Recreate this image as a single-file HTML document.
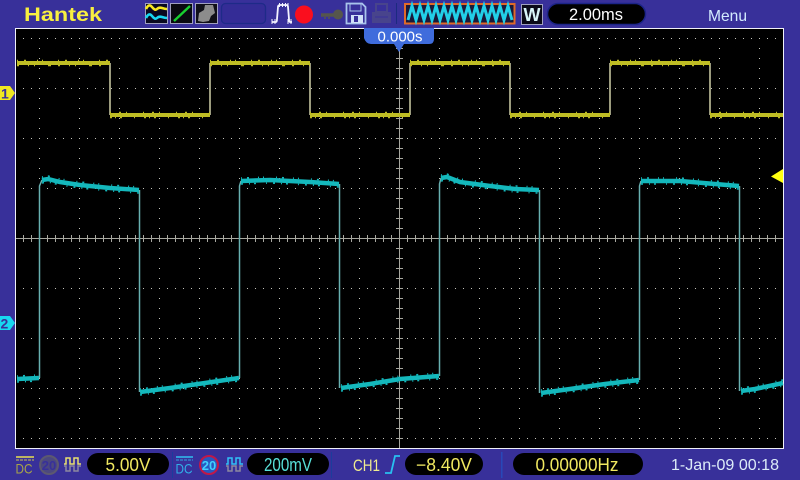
<!DOCTYPE html>
<html lang="en">
<head>
<meta charset="utf-8">
<title>Hantek Oscilloscope</title>
<style>
html,body{margin:0;padding:0;background:#38309a;width:800px;height:480px;overflow:hidden}
svg{display:block;position:absolute;left:0;top:0}
text{font-family:"Liberation Sans",sans-serif}
</style>
</head>
<body>
<svg width="800" height="480" viewBox="0 0 800 480" xmlns="http://www.w3.org/2000/svg">
<defs>
  <pattern id="hd" x="23" y="38" width="8" height="50" patternUnits="userSpaceOnUse"><rect width="1" height="1" fill="#c4c4bc"/></pattern>
  <pattern id="vd" x="39" y="38" width="40" height="10" patternUnits="userSpaceOnUse"><rect width="1" height="1" fill="#c4c4bc"/></pattern>
  <path id="t1" d="M17 63H110M210 63H310M410 63H510M610 63H710"/>
  <path id="t1l" d="M110 115H210M310 115H410M510 115H610M710 115H783"/>
  <path id="t2" d="M17 379L39 378M42 180L48 179L60 182L80 185L110 188L139 190M241 181L270 180L310 182L339 184M441 178L447 177L460 182L490 186L515 189L539 190M641 181L680 181L715 184L739 186M140 392L170 388L205 383L239 378M341 388L370 384L400 379L439 376M541 393L570 389L605 384L639 380M741 391L755 389L783 383"/>
</defs>

<rect width="800" height="480" fill="#38309a"/>

<!-- screen -->
<rect x="15.5" y="28.5" width="768" height="420" fill="#000" stroke="#f0f0f8" stroke-width="1"/>
<rect x="16" y="29" width="767" height="419" fill="url(#hd)"/>
<rect x="16" y="29" width="767" height="419" fill="url(#vd)"/>

<!-- centre axes -->
<path d="M16 238.5H783M399.5 29V448" stroke="#a8a8a0" stroke-width="1" fill="none"/>
<path d="M23.5 235V242M31.5 235V242M39.5 235V242M47.5 235V242M55.5 235V242M63.5 235V242M71.5 235V242M79.5 235V242M87.5 235V242M95.5 235V242M103.5 235V242M111.5 235V242M119.5 235V242M127.5 235V242M135.5 235V242M143.5 235V242M151.5 235V242M159.5 235V242M167.5 235V242M175.5 235V242M183.5 235V242M191.5 235V242M199.5 235V242M207.5 235V242M215.5 235V242M223.5 235V242M231.5 235V242M239.5 235V242M247.5 235V242M255.5 235V242M263.5 235V242M271.5 235V242M279.5 235V242M287.5 235V242M295.5 235V242M303.5 235V242M311.5 235V242M319.5 235V242M327.5 235V242M335.5 235V242M343.5 235V242M351.5 235V242M359.5 235V242M367.5 235V242M375.5 235V242M383.5 235V242M391.5 235V242M407.5 235V242M415.5 235V242M423.5 235V242M431.5 235V242M439.5 235V242M447.5 235V242M455.5 235V242M463.5 235V242M471.5 235V242M479.5 235V242M487.5 235V242M495.5 235V242M503.5 235V242M511.5 235V242M519.5 235V242M527.5 235V242M535.5 235V242M543.5 235V242M551.5 235V242M559.5 235V242M567.5 235V242M575.5 235V242M583.5 235V242M591.5 235V242M599.5 235V242M607.5 235V242M615.5 235V242M623.5 235V242M631.5 235V242M639.5 235V242M647.5 235V242M655.5 235V242M663.5 235V242M671.5 235V242M679.5 235V242M687.5 235V242M695.5 235V242M703.5 235V242M711.5 235V242M719.5 235V242M727.5 235V242M735.5 235V242M743.5 235V242M751.5 235V242M759.5 235V242M767.5 235V242M775.5 235V242" stroke="#a8a8a0" stroke-width="1" fill="none"/>
<path d="M396 38.5H403M396 48.5H403M396 58.5H403M396 68.5H403M396 78.5H403M396 88.5H403M396 98.5H403M396 108.5H403M396 118.5H403M396 128.5H403M396 138.5H403M396 148.5H403M396 158.5H403M396 168.5H403M396 178.5H403M396 188.5H403M396 198.5H403M396 208.5H403M396 218.5H403M396 228.5H403M396 248.5H403M396 258.5H403M396 268.5H403M396 278.5H403M396 288.5H403M396 298.5H403M396 308.5H403M396 318.5H403M396 328.5H403M396 338.5H403M396 348.5H403M396 358.5H403M396 368.5H403M396 378.5H403M396 388.5H403M396 398.5H403M396 408.5H403M396 418.5H403M396 428.5H403M396 438.5H403" stroke="#a8a8a0" stroke-width="1" fill="none"/>

<!-- CH1 trace -->
<path d="M110 63V115M210 115V63M310 63V115M410 115V63M510 63V115M610 115V63M710 63V115" stroke="#d0d0a8" stroke-width="1.500" fill="none"/>
<g fill="none" stroke="#bfbd24">
  <use href="#t1" stroke-width="4"/>
  <use href="#t1l" stroke-width="4"/>
  <use href="#t1" stroke-width="1.500" stroke-dasharray="1 6 2 11 1 4 1 15" transform="translate(0,-2.500)"/>
  <use href="#t1" stroke-width="1.500" stroke-dasharray="2 9 1 5 1 13 3 7" transform="translate(0,2.500)"/>
  <use href="#t1l" stroke-width="1.500" stroke-dasharray="1 8 2 5 1 16" transform="translate(0,-2.500)"/>
  <use href="#t1l" stroke-width="1.500" stroke-dasharray="2 3 1 4 2 12 1 9" transform="translate(0,2.500)"/>
</g>

<!-- CH2 trace -->
<path d="M39.500 378V186L42 180M139.500 190V392M239.500 378V186L241 181M339.500 184V388M439.500 376V184L441 178M539.500 190V393M639.500 380V186L641 181M739.500 186V391" stroke="#68b0b0" stroke-width="1.500" fill="none"/>
<g fill="none" stroke="#14b8bc">
  <use href="#t2" stroke-width="4.500"/>
  <use href="#t2" stroke-width="1.500" stroke-dasharray="1 5 2 9 1 4 1 12" transform="translate(0,-3)"/>
  <use href="#t2" stroke-width="1.500" stroke-dasharray="2 6 1 4 2 10 1 6" transform="translate(0,3)"/>
</g>

<!-- channel markers -->
<path d="M0 86H10L15 93L10 100H0Z" fill="#f0e820"/>
<text x="1" y="98.500" font-size="14" font-weight="bold" fill="#38309a">1</text>
<path d="M0 316H10L15 323L10 330H0Z" fill="#18d8f0"/>
<text x="0.500" y="328.500" font-size="14" font-weight="bold" fill="#38309a">2</text>
<path d="M783 169V183L771 176.500Z" fill="#ffff10"/>

<!-- time marker -->
<path d="M364 28H434V39Q434 44 429 44H404L399 52L394 44H371Q366 44 364 38Z" fill="#3f6cdc"/>
<text x="400" y="41.500" font-size="15" fill="#fff" text-anchor="middle" textLength="45" lengthAdjust="spacingAndGlyphs">0.000s</text>

<!-- header -->
<text x="24" y="21" font-size="19" font-weight="bold" fill="#f8f040" textLength="78" lengthAdjust="spacingAndGlyphs">Hantek</text>

<rect x="145.500" y="3.500" width="22" height="20" fill="#0a0a20" stroke="#a0a0c0"/>
<path d="M146 9Q149 3 152 7T157 9T162 8T167 9" fill="none" stroke="#f8e820" stroke-width="2.600"/>
<path d="M146 18Q149 12 152 16T157 18T162 17T167 18" fill="none" stroke="#18d8f0" stroke-width="2.600"/>

<rect x="170.500" y="3.500" width="22" height="20" fill="#0a0a10" stroke="#a0a0c0"/>
<path d="M174 21L190 6" stroke="#18d030" stroke-width="2.400" fill="none"/>

<rect x="195.500" y="3.500" width="22" height="20" fill="#101018" stroke="#a0a0c0"/>
<path d="M198 21L199 13L204 10L205 5L213 5L215 13L211 16L209 21L203 22Z" fill="#8c8c8c"/>

<rect x="221.500" y="3.500" width="44" height="20" rx="4" fill="#342c96" stroke="#1e2a88" stroke-width="1.300"/>

<path d="M272 22H276Q277 22 277 19L278 7Q278 5 280 5H286Q288 5 288 7L289 19Q289 22 290 22H292" fill="none" stroke="#f4f4ff" stroke-width="1.800"/>
<path d="M279.500 3V7M282.500 3V7M285.500 3V7M288 3V7M272 19V24M275 19V24M288 19V24M291 19V24" stroke="#f4f4ff" stroke-width="1"/>
<circle cx="304" cy="14.500" r="9" fill="#fa0e1e"/>

<path d="M322 15H334" stroke="#56564c" stroke-width="3.500"/>
<path d="M326 15L321 13V17Z" fill="#56564c"/>
<path d="M325 17V19M329 17V19" stroke="#56564c" stroke-width="1.500"/>
<circle cx="338" cy="14.500" r="5" fill="#56564c"/>

<path d="M346.500 3.500H362L365.500 7V23.500H346.500Z" fill="none" stroke="#a8c4ec" stroke-width="1.800"/>
<rect x="350" y="4" width="11" height="7" fill="none" stroke="#a8c4ec"/>
<rect x="351" y="15" width="12" height="8" fill="#d0e0f8"/>
<rect x="354" y="16" width="4" height="6" fill="#38309a"/>

<path d="M376 4H387V12H376Z" fill="none" stroke="#48448c" stroke-width="2"/>
<path d="M372 12H391V23H372Z" fill="#48448c"/>
<path d="M375 17H388" stroke="#38309a" stroke-width="1"/>

<rect x="396" y="3" width="1" height="21" fill="#1c2a80"/>

<rect x="405" y="4" width="109.500" height="19.500" fill="#1a1a3a" stroke="#e06a28" stroke-width="2"/>
<path d="M408 20L412 6L416 20L420 6L424 20L428 6L432 20L436 6L440 20L444 6L448 20L452 6L456 20L460 6L464 20L468 6L472 20L476 6L480 20L484 6L488 20L492 6L496 20L500 6L504 20L508 6L512 20" fill="none" stroke="#22d0e8" stroke-width="3"/>

<rect x="521.500" y="4.500" width="21" height="20" fill="#0a0a18" stroke="#a0a0c0"/>
<text x="532" y="21" font-size="18" font-weight="bold" fill="#d8f4f8" text-anchor="middle">W</text>

<rect x="547.500" y="3.500" width="98" height="21" rx="10.500" fill="#000" stroke="#1c2488" stroke-width="1.500"/>
<text x="596" y="20" font-size="17" fill="#fff" text-anchor="middle" textLength="54" lengthAdjust="spacingAndGlyphs">2.00ms</text>

<text x="708" y="21" font-size="16" fill="#d4ecff" textLength="39" lengthAdjust="spacingAndGlyphs">Menu</text>

<!-- footer CH1 -->
<path d="M16 457H34" stroke="#e8e050" stroke-width="1.500"/>
<path d="M16 460H34" stroke="#c8c050" stroke-width="1" stroke-dasharray="3 1"/>
<text x="24" y="473.500" font-size="14" fill="#a8a448" text-anchor="middle" textLength="17" lengthAdjust="spacingAndGlyphs">DC</text>
<circle cx="49" cy="465" r="9" fill="#4c4880" stroke="#5c5870" stroke-width="2"/>
<text x="49" y="470" font-size="13" font-weight="bold" fill="#38309a" text-anchor="middle">20</text>
<path d="M64 464H66V458H70V464H74V458H78V464H81" fill="none" stroke="#e8e070" stroke-width="1.500"/>
<path d="M64 466H66V471H70V466H74V471H78V466H81" fill="none" stroke="#8c88a0" stroke-width="1.500"/>
<rect x="87" y="453" width="82" height="22" rx="11" fill="#000"/>
<text x="128" y="471" font-size="18" fill="#f0e860" text-anchor="middle" textLength="45" lengthAdjust="spacingAndGlyphs">5.00V</text>
<rect x="172" y="452" width="1" height="26" fill="#1c3c9c"/>

<!-- footer CH2 -->
<path d="M176 457H193" stroke="#30c0f0" stroke-width="1.500"/>
<path d="M176 460H193" stroke="#2ca8e0" stroke-width="1" stroke-dasharray="3 1"/>
<text x="184" y="473.500" font-size="14" fill="#30b0e8" text-anchor="middle" textLength="17" lengthAdjust="spacingAndGlyphs">DC</text>
<circle cx="209" cy="465" r="9" fill="#2858c0" stroke="#c01848" stroke-width="2"/>
<text x="209" y="470" font-size="13" font-weight="bold" fill="#40d0ff" text-anchor="middle">20</text>
<path d="M226 464H228V458H232V464H236V458H240V464H243" fill="none" stroke="#30c0f8" stroke-width="1.500"/>
<path d="M226 466H228V471H232V466H236V471H240V466H243" fill="none" stroke="#8c88a0" stroke-width="1.500"/>
<rect x="247" y="453" width="82" height="22" rx="11" fill="#000"/>
<text x="288" y="471" font-size="18" fill="#58e0d8" text-anchor="middle" textLength="48" lengthAdjust="spacingAndGlyphs">200mV</text>
<rect x="331" y="452" width="1" height="26" fill="#1c3c9c"/>

<!-- trigger -->
<text x="353" y="471" font-size="17" fill="#f0ec90" textLength="27" lengthAdjust="spacingAndGlyphs">CH1</text>
<path d="M385 473H391L395 456H400" fill="none" stroke="#28c0f0" stroke-width="1.800"/>
<rect x="405" y="453" width="78" height="22" rx="11" fill="#000"/>
<text x="444" y="471" font-size="18" fill="#f0e860" text-anchor="middle" textLength="56" lengthAdjust="spacingAndGlyphs">−8.40V</text>
<rect x="501" y="452" width="1.500" height="26" fill="#2848b8"/>

<rect x="513" y="453" width="130" height="22" rx="11" fill="#000"/>
<text x="577" y="471" font-size="18" fill="#f0e860" text-anchor="middle" textLength="83" lengthAdjust="spacingAndGlyphs">0.00000Hz</text>

<text x="671" y="470" font-size="16" fill="#dcecf8" textLength="108" lengthAdjust="spacingAndGlyphs">1-Jan-09 00:18</text>
</svg>
</body>
</html>
